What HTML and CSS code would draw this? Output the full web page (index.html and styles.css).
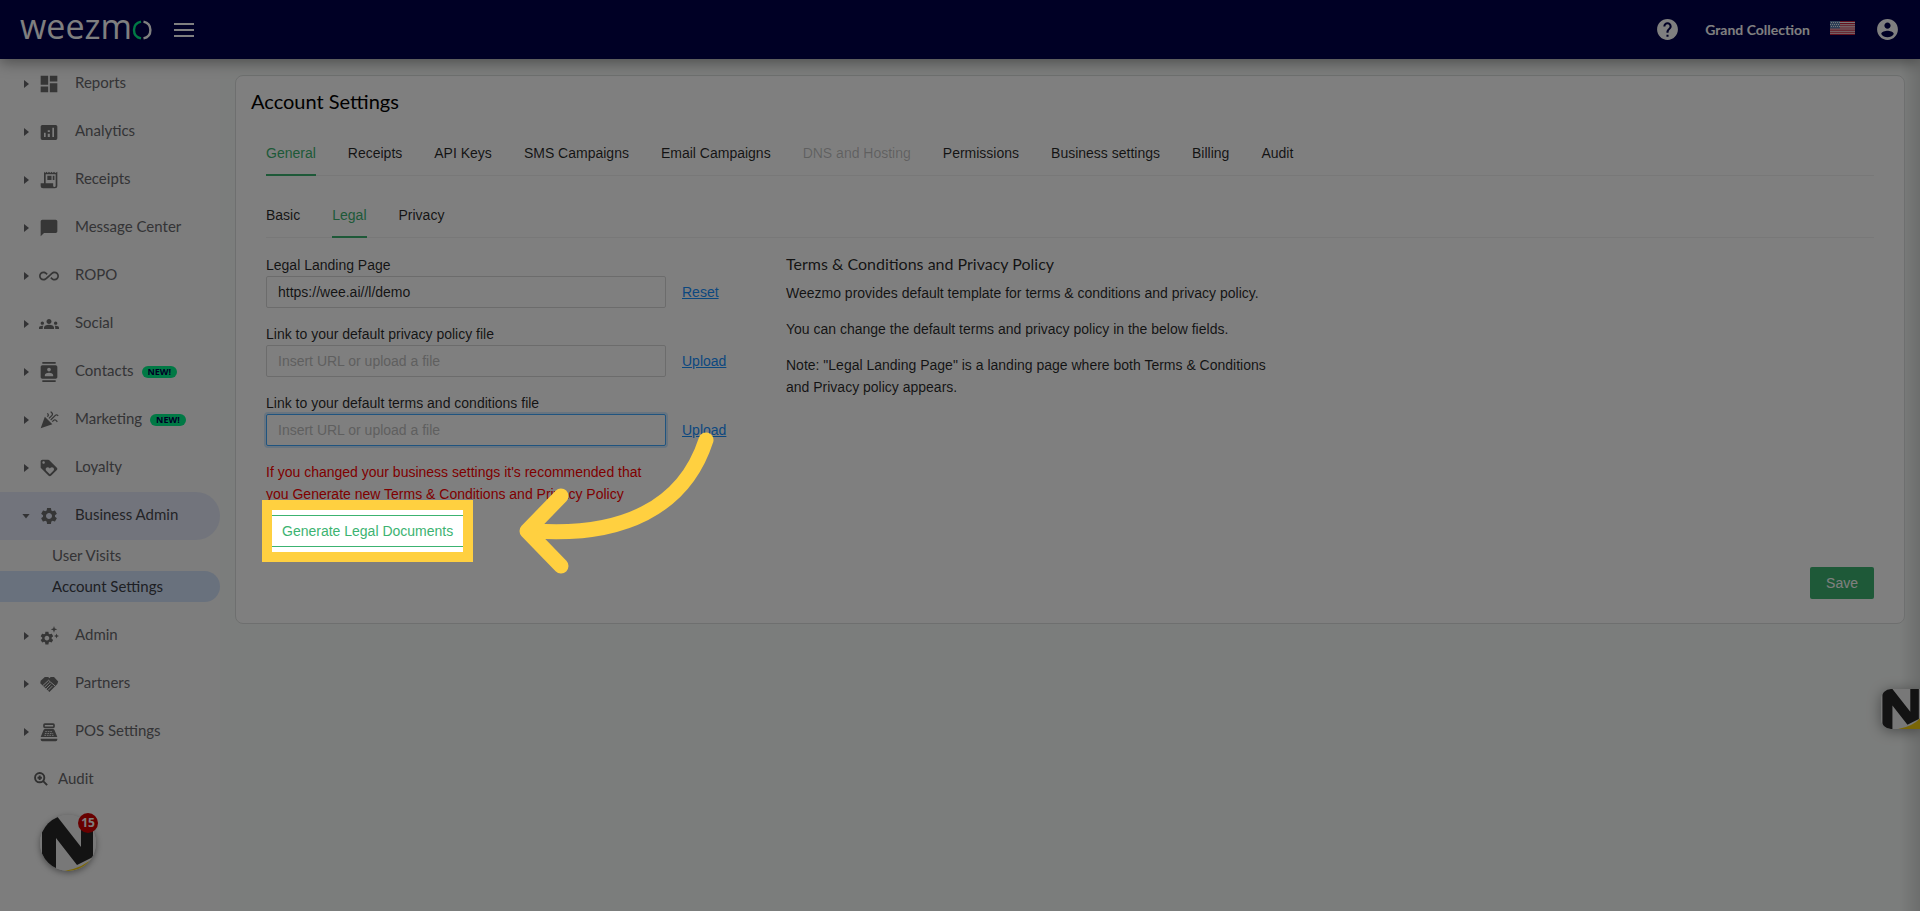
FILE: index.html
```html
<!DOCTYPE html>
<html lang="en">
<head>
<meta charset="utf-8">
<title>Account Settings</title>
<link rel="stylesheet" href="styles.css">
</head>
<body>
<svg class="sprite" aria-hidden="true">
  <symbol id="gear" viewBox="0 0 24 24"><path d="M19.14 12.94c.04-.3.06-.61.06-.94 0-.32-.02-.64-.07-.94l2.03-1.58c.18-.14.23-.41.12-.61l-1.92-3.32c-.12-.22-.37-.29-.59-.22l-2.39.96c-.5-.38-1.03-.7-1.62-.94l-.36-2.54c-.04-.24-.24-.41-.48-.41h-3.84c-.24 0-.43.17-.47.41l-.36 2.54c-.59.24-1.13.57-1.62.94l-2.39-.96c-.22-.08-.47 0-.59.22L2.74 8.87c-.12.21-.08.47.12.61l2.03 1.58c-.05.3-.09.63-.09.94s.02.64.07.94l-2.03 1.58c-.18.14-.23.41-.12.61l1.92 3.32c.12.22.37.29.59.22l2.39-.96c.5.38 1.03.7 1.62.94l.36 2.54c.05.24.24.41.48.41h3.84c.24 0 .44-.17.47-.41l.36-2.54c.59-.24 1.13-.56 1.62-.94l2.39.96c.22.08.47 0 .59-.22l1.92-3.32c.12-.22.07-.47-.12-.61l-2.01-1.58zM12 15.6c-1.98 0-3.6-1.62-3.6-3.6s1.62-3.6 3.6-3.6 3.6 1.62 3.6 3.6-1.62 3.6-3.6 3.6z"/></symbol>
  <symbol id="mark" viewBox="0 0 56 56"><rect width="56" height="56" fill="#f0f0f0"/><path d="M56 40V56H24Q44 53 56 40z" fill="#f5cc0c"/><path d="M2 0H16L41 32V0H53V42L37 50L16 23V56H2z" fill="#262626"/></symbol>
</svg>

<header class="topbar">
  <a class="logo" href="#" aria-label="weezmo">
    <span class="logo-text">weezm</span>
    <svg width="20" height="20" viewBox="0 0 20 20" fill="none" stroke-width="2.4"><path d="M9 1.6Q2 3 2 10T9 18.4" stroke="#00f28a"/><path d="M11.5 1.6Q18.4 3 18.4 10T11.5 18.4" stroke="#fff"/></svg>
  </a>
  <button class="icon-button" aria-label="Toggle menu"><svg width="20" height="14" viewBox="0 0 20 14" fill="#fff"><path d="M0 0h20v2H0zM0 6h20v2H0zM0 12h20v2H0z"/></svg></button>
  <div class="topbar-right">
    <button class="icon-button" aria-label="Help"><svg width="25" height="25" viewBox="0 0 24 24" fill="#fff"><path d="M12 2C6.48 2 2 6.48 2 12s4.48 10 10 10 10-4.48 10-10S17.52 2 12 2zm1 17h-2v-2h2v2zm2.07-7.75l-.9.92C13.45 12.9 13 13.5 13 15h-2v-.5c0-1.1.45-2.1 1.17-2.83l1.24-1.26c.37-.36.59-.86.59-1.41 0-1.1-.9-2-2-2s-2 .9-2 2H8c0-2.21 1.79-4 4-4s4 1.79 4 4c0 .88-.36 1.68-.93 2.25z"/></svg></button>
    <span class="account-name">Grand Collection</span>
    <button class="icon-button" aria-label="Language: English (US)"><svg class="flag" width="25" height="14" viewBox="0 0 25 14"><rect width="25" height="14" fill="#f4f4f4"/><path d="M0 .5h25M0 2.6h25M0 4.8h25M0 7h25M0 9.1h25M0 11.2h25M0 13.4h25" stroke="#c8203c" stroke-width="1.1"/><rect width="10" height="7.5" fill="#5b7fae"/><path d="M1 1.5h9M0 3.5h9M1 5.5h9" stroke="#e8f0f8" stroke-width="1" stroke-dasharray="1 1"/></svg></button>
    <button class="icon-button" aria-label="Profile"><svg width="25" height="25" viewBox="0 0 24 24" fill="#fff"><path d="M12 2C6.48 2 2 6.48 2 12s4.48 10 10 10 10-4.48 10-10S17.52 2 12 2zm0 3.2c1.66 0 3 1.34 3 3s-1.34 3-3 3-3-1.34-3-3 1.34-3 3-3zm0 14.3c-2.5 0-4.71-1.28-6-3.22.03-1.99 4-3.08 6-3.08s5.97 1.09 6 3.08c-1.29 1.94-3.5 3.22-6 3.22z"/></svg></button>
  </div>
</header>

<div class="shell">
  <nav class="sidebar" aria-label="Main">
    <a class="nav-item" href="#"><i class="caret"></i><svg class="icon" viewBox="0 0 24 24"><path d="M2 13h9V2H2zM2 22h9v-7H2zM13 22h9V11h-9zM13 2v7h9V2z"/></svg><span>Reports</span></a>
    <a class="nav-item" href="#"><i class="caret"></i><svg class="icon" viewBox="0 0 24 24"><path fill-rule="evenodd" d="M4 3.500h16a2 2 0 0 1 2 2v14a2 2 0 0 1-2 2H4a2 2 0 0 1-2-2v-14a2 2 0 0 1 2-2zM6 13v5h2v-5zM10.500 10v2h2.500v-2zM10.500 14v4h2.500v-4zM16 7v11h2V7z"/></svg><span>Analytics</span></a>
    <a class="nav-item" href="#"><i class="caret"></i><svg class="icon" viewBox="0 0 24 24"><path fill-rule="evenodd" d="M6 2l1.500 1.500L9 2l1.500 1.500L12 2l1.500 1.500L15 2l1.500 1.500L18 2l1.500 1.500L22 2v17a3 3 0 0 1-3 3H5a3 3 0 0 1-3-3v-3h4zM8 5v11h9v3a1.500 1.500 0 0 0 3 0V5z"/><path d="M10 7h5v5h-5zM16.500 7h2v5h-2z"/></svg><span>Receipts</span></a>
    <a class="nav-item" href="#"><i class="caret"></i><svg class="icon" viewBox="0 0 24 24"><path d="M20 2H4c-1.100 0-1.990.9-1.990 2L2 22l4-4h14c1.100 0 2-.9 2-2V4c0-1.100-.9-2-2-2z"/></svg><span>Message Center</span></a>
    <a class="nav-item" href="#"><i class="caret"></i><svg class="icon" viewBox="0 0 24 24"><path d="M18.600 6.620c-1.440 0-2.800.56-3.770 1.530L12 10.660 10.480 12h.01L7.800 14.390c-.64.64-1.490.99-2.400.99-1.870 0-3.390-1.510-3.390-3.380S3.530 8.620 5.400 8.620c.91 0 1.760.35 2.440 1.030l1.130 1 1.510-1.340L9.220 8.200C8.200 7.180 6.840 6.620 5.400 6.620 2.420 6.620 0 9.040 0 12s2.420 5.380 5.400 5.380c1.440 0 2.800-.56 3.770-1.530l2.830-2.500.01.01L13.520 12h-.01l2.690-2.390c.64-.64 1.490-.99 2.400-.99 1.870 0 3.390 1.510 3.390 3.380s-1.520 3.380-3.390 3.380c-.9 0-1.760-.35-2.440-1.030l-1.140-1.010-1.510 1.340 1.270 1.120c1.020 1.010 2.370 1.570 3.820 1.570 2.980 0 5.400-2.410 5.400-5.380s-2.420-5.370-5.400-5.370z"/></svg><span>ROPO</span></a>
    <a class="nav-item" href="#"><i class="caret"></i><svg class="icon" viewBox="0 0 24 24"><path d="M12 12.750c1.630 0 3.070.39 4.240.9 1.080.48 1.760 1.560 1.760 2.730V18H6v-1.610c0-1.180.68-2.260 1.760-2.730 1.170-.52 2.610-.91 4.240-.91zM4 13c1.100 0 2-.9 2-2s-.9-2-2-2-2 .9-2 2 .9 2 2 2zm1.130 1.100c-.37-.06-.74-.1-1.130-.1-.99 0-1.930.21-2.780.58C.48 14.900 0 15.620 0 16.430V18h4.500v-1.610c0-.83.23-1.610.63-2.290zM20 13c1.100 0 2-.9 2-2s-.9-2-2-2-2 .9-2 2 .9 2 2 2zm4 3.430c0-.81-.48-1.530-1.220-1.850-.85-.37-1.790-.58-2.780-.58-.39 0-.76.04-1.130.1.4.68.63 1.460.63 2.290V18H24v-1.570zM12 6c1.660 0 3 1.340 3 3s-1.340 3-3 3-3-1.340-3-3 1.340-3 3-3z"/></svg><span>Social</span></a>
    <a class="nav-item" href="#"><i class="caret"></i><svg class="icon" viewBox="0 0 24 24"><path d="M20 0H4v2h16V0zM4 24h16v-2H4v2zM20 4H4c-1.100 0-2 .9-2 2v12c0 1.100.9 2 2 2h16c1.100 0 2-.9 2-2V6c0-1.100-.9-2-2-2zm-8 2.750c1.240 0 2.250 1.010 2.250 2.250s-1.010 2.250-2.250 2.250S9.750 10.240 9.750 9 10.760 6.750 12 6.750zM17 17H7v-1.500c0-1.670 3.330-2.500 5-2.500s5 .83 5 2.500V17z"/></svg><span>Contacts</span><b class="new">NEW!</b></a>
    <a class="nav-item" href="#"><i class="caret"></i><svg class="icon" viewBox="0 0 24 24"><path d="M2 22l14-5-9-9zM14.530 12.530l5.590-5.590c.49-.49 1.280-.49 1.770 0l.59.59 1.060-1.060-.59-.59c-1.070-1.070-2.820-1.070-3.890 0l-5.590 5.590zM10.060 6.880l-.59.59 1.060 1.060.59-.59c1.070-1.070 1.070-2.820 0-3.890l-.59-.59-1.060 1.070.59.59c.48.48.48 1.280 0 1.760zM17.060 11.880l-1.590 1.590 1.060 1.060 1.590-1.590c.49-.49 1.280-.49 1.770 0l1.610 1.610 1.060-1.060-1.610-1.610c-1.080-1.070-2.820-1.070-3.890 0zM15.060 5.880l-3.590 3.590 1.060 1.060 3.590-3.590c1.070-1.070 1.070-2.820 0-3.890l-1.590-1.590-1.060 1.060 1.590 1.590c.48.49.48 1.290 0 1.770z"/></svg><span>Marketing</span><b class="new">NEW!</b></a>
    <a class="nav-item" href="#"><i class="caret"></i><svg class="icon" viewBox="0 0 24 24"><path d="M21.410 11.580l-9-9C12.050 2.220 11.550 2 11 2H4c-1.100 0-2 .9-2 2v7c0 .55.22 1.050.59 1.420l9 9c.36.36.86.58 1.410.58.55 0 1.050-.22 1.410-.59l7-7c.37-.36.59-.86.59-1.410 0-.55-.23-1.060-.59-1.420zM5.500 7C4.670 7 4 6.330 4 5.500S4.670 4 5.500 4 7 4.670 7 5.500 6.330 7 5.500 7zm11.770 8.270L13 19.540l-4.270-4.270C8.280 14.810 8 14.190 8 13.500c0-1.380 1.120-2.500 2.500-2.500.69 0 1.320.28 1.770.74l.73.72.73-.73c.45-.45 1.080-.73 1.770-.73 1.380 0 2.500 1.120 2.500 2.500 0 .69-.28 1.320-.73 1.770z"/></svg><span>Loyalty</span></a>
    <a class="nav-item open" href="#"><i class="caret"></i><svg class="icon"><use href="#gear"/></svg><span>Business Admin</span></a>
    <div class="subnav">
      <a class="sub-item" href="#">User Visits</a>
      <a class="sub-item current" href="#" aria-current="page">Account Settings</a>
    </div>
    <a class="nav-item" href="#"><i class="caret"></i><svg class="icon" viewBox="0 0 24 24"><use href="#gear" x="0" y="5" width="19" height="19"/><path d="M18 0l1 3 3 1-3 1-1 3-1-3-3-1 3-1zM21 9l.8 2.200L24 12l-2.200.8L21 15l-.8-2.200L18 12l2.200-.8z"/></svg><span>Admin</span></a>
    <a class="nav-item" href="#"><i class="caret"></i><svg class="icon" viewBox="0 0 24 24"><path d="M7 3.500h4L12.500 5 14 3.500h4l5 5.500-1 3-9.500 9.500L1.500 11 2 8z"/><path d="M4.500 14l7-6.500 2 2M6.500 16l6-6M8.500 18l5.500-5.500M10.500 20l5.500-5.500M13.500 9.500l6 5" fill="none" stroke="#fafafa" stroke-width="1.200"/></svg><span>Partners</span></a>
    <a class="nav-item" href="#"><i class="caret"></i><svg class="icon" viewBox="0 0 24 24"><path fill-rule="evenodd" d="M7 1.500h10a2 2 0 0 1 2 2v2a2 2 0 0 1-2 2H7a2 2 0 0 1-2-2v-2a2 2 0 0 1 2-2zM7 3.500v2h10v-2zM7.300 8.500h9.400a2 2 0 0 1 1.830 1.190L22 18H2l3.470-8.310A2 2 0 0 1 7.300 8.500zM2 20h20v1a2 2 0 0 1-2 2H4a2 2 0 0 1-2-2z"/><path d="M7.500 11.500h9M7 13.800h10M6.500 16h11" stroke="#fafafa" stroke-width="1" stroke-dasharray="2 1"/></svg><span>POS Settings</span></a>
    <a class="nav-item plain" href="#"><svg class="icon small" viewBox="0 0 16 16" fill="none" stroke="#606060" stroke-width="2.200"><circle cx="6.500" cy="6.500" r="5.300"/><path d="M10.500 10.500L15 15M6.500 4v5M4 6.500h5"/></svg><span>Audit</span></a>
    <button class="assistant" aria-label="Messages, 15 unread"><svg width="56" height="56"><use href="#mark"/></svg><span class="count">15</span></button>
  </nav>

  <main class="content">
    <section class="card">
      <h1>Account Settings</h1>
      <div class="card-body">
        <nav class="tabs" aria-label="Settings">
          <a class="active" href="#">General</a><a href="#">Receipts</a><a href="#">API Keys</a><a href="#">SMS Campaigns</a><a href="#">Email Campaigns</a><a class="disabled" aria-disabled="true">DNS and Hosting</a><a href="#">Permissions</a><a href="#">Business settings</a><a href="#">Billing</a><a href="#">Audit</a>
        </nav>
        <nav class="tabs" aria-label="General">
          <a href="#">Basic</a><a class="active" href="#">Legal</a><a href="#">Privacy</a>
        </nav>
        <div class="columns">
          <form class="form">
            <div class="field">
              <label for="landing">Legal Landing Page</label>
              <div class="row"><input id="landing" type="text" value="https://wee.ai//l/demo"><a href="#">Reset</a></div>
            </div>
            <div class="field">
              <label for="privacy">Link to your default privacy policy file</label>
              <div class="row"><input id="privacy" type="text" placeholder="Insert URL or upload a file"><a href="#">Upload</a></div>
            </div>
            <div class="field">
              <label for="terms">Link to your default terms and conditions file</label>
              <div class="row"><input id="terms" class="focused" type="text" placeholder="Insert URL or upload a file"><a href="#">Upload</a></div>
            </div>
            <p class="warning">If you changed your business settings it's recommended that you Generate new Terms &amp; Conditions and Privacy Policy</p>
            <div class="generate">
              <button class="outline" type="button">Generate Legal Documents</button>
              <div class="spotlight"></div>
              <svg class="arrow" width="210" height="150" viewBox="0 0 210 150" fill="none" stroke="#ffd040" stroke-width="15" stroke-linecap="round" stroke-linejoin="round"><path d="M196 15C174 83 112 112 24 106"/><path d="M51 71L17 106L51 141"/></svg>
            </div>
          </form>
          <div class="info">
            <h2>Terms &amp; Conditions and Privacy Policy</h2>
            <p>Weezmo provides default template for terms &amp; conditions and privacy policy.</p>
            <p>You can change the default terms and privacy policy in the below fields.</p>
            <p>Note: "Legal Landing Page" is a landing page where both Terms &amp; Conditions and Privacy policy appears.</p>
          </div>
        </div>
        <div class="actions"><button class="save" type="button">Save</button></div>
      </div>
    </section>
  </main>
</div>
<button class="side-tab" aria-label="Open panel"><svg width="40" height="40"><use href="#mark"/></svg></button>
</body>
</html>
```
FILE: styles.css
```css
* { box-sizing: border-box; }

body {
  margin: 0;
  min-height: 100vh;
  display: flex;
  flex-direction: column;
  overflow: hidden;
  background: #f7faf8;
  color: rgba(0, 0, 0, 0.85);
  font: 14px/22px "Liberation Sans", Arial, sans-serif;
}

button { padding: 0; border: 0; background: none; font: inherit; cursor: pointer; }
a { color: inherit; text-decoration: none; }
.sprite { position: absolute; width: 0; height: 0; }

/* Top bar */
.topbar {
  position: relative;
  z-index: 1;
  display: flex;
  align-items: center;
  height: 59px;
  padding: 0 20px;
  gap: 22px;
  background: #00004a;
  color: #fff;
  box-shadow: 0 3px 14px rgba(0, 0, 0, 0.4);
}
.logo { display: flex; align-items: center; }
.logo-text { font: 400 34px/48px "Open Sans", sans-serif; padding-bottom: 8px; }
.icon-button { display: flex; align-items: center; }
.topbar-right { display: flex; align-items: center; gap: 20px; margin-left: auto; }
.account-name { padding-left: 5px; font: 700 14px/20px Lato, sans-serif; }
.flag { margin-bottom: 3px; }

/* Sidebar */
.shell { flex: 1; display: flex; }
.sidebar {
  width: 220px;
  flex: none;
  padding-top: 1px;
  background: #fafafa;
  color: #68686c;
  font: 15px/20px Lato, sans-serif;
}
.nav-item { display: flex; align-items: center; height: 48px; padding-left: 24px; border-radius: 0 24px 24px 0; }
.nav-item span { padding-bottom: 4px; }
.caret { width: 5px; height: 8px; margin-right: 10px; background: #66666a; clip-path: polygon(0 0, 100% 50%, 0 100%); }
.icon { width: 20px; height: 20px; margin-right: 16px; fill: #6c6c6c; }
.nav-item.open { padding-left: 22px; background: #e4e9f8; color: #48484e; }
.open .caret { width: 8px; height: 5px; margin-right: 9px; clip-path: polygon(0 0, 100% 0, 50% 100%); }
.new {
  margin-left: 8px;
  padding: 0 6px;
  border-radius: 6px;
  background: #00f28a;
  color: #00004a;
  font: 700 9px/12px "Open Sans", sans-serif;
}
.subnav { padding-bottom: 10px; }
.sub-item { display: block; padding: 5px 0 6px 52px; border-radius: 0 16px 16px 0; }
.sub-item.current { background: #d2e2fa; color: #3c3f48; }
.nav-item.plain { padding-left: 34px; }
.icon.small { width: 14px; height: 14px; margin-right: 10px; margin-bottom: 2px; fill: none; }
.assistant { position: relative; display: block; margin: 11px 0 0 40px; width: 56px; height: 56px; }
.assistant svg { display: block; border-radius: 50%; box-shadow: 0 2px 6px rgba(0, 0, 0, 0.4); }
.count {
  position: absolute;
  top: -2px;
  right: -2px;
  width: 20px;
  border-radius: 50%;
  background: #d00000;
  color: #fff;
  font: 700 12px/20px "Open Sans", sans-serif;
}

/* Card */
.content {
  flex: 1;
  min-width: 0;
  padding: 16px 15px;
  background: linear-gradient(to left, rgba(0, 0, 0, 0.12), transparent 20px);
}
.card { padding: 10px 15px 24px; border: 1px solid #dcdfde; border-radius: 8px; background: #fff; }
h1 { margin: 0 0 14px; color: #000; font: 400 20px/30px Lato, sans-serif; }
.card-body { padding: 0 15px; }
.tabs { display: flex; gap: 32px; margin-bottom: 16px; border-bottom: 1px solid #f0f0f0; }
.tabs a { padding: 12px 0 10px; margin-bottom: -1px; border-bottom: 2px solid transparent; white-space: nowrap; }
.tabs .active { color: #3cb371; border-color: #3cb371; }
.tabs .disabled { color: rgba(0, 0, 0, 0.25); }

.columns { display: flex; align-items: flex-start; }
.form { flex: 0 0 520px; }
.field { margin-bottom: 15px; }
.field label { display: block; }
.row { display: flex; align-items: center; gap: 16px; }
.row a { color: #1890ff; text-decoration: underline; }
.row input {
  width: 400px;
  height: 32px;
  padding: 4px 11px;
  border: 1px solid #d9d9d9;
  border-radius: 2px;
  background: #fff;
  color: inherit;
  font: inherit;
}
.row input::placeholder { color: #bfbfbf; }
.row .focused { border-color: #40a9ff; box-shadow: 0 0 0 2px rgba(24, 144, 255, 0.2); outline: 0; }
.warning { width: 400px; margin: 0 0 10px; color: #f00; }
.outline {
  height: 32px;
  padding: 0 15px;
  border: 1px solid #3cb371;
  border-radius: 2px;
  background: #fff;
  color: #3cb371;
}

/* Tour step: dims the page around the highlighted button */
.generate { position: relative; width: fit-content; height: 32px; display: flex; }
.spotlight {
  position: absolute;
  z-index: 10;
  inset: -15px -4px;
  border: 10px solid #ffd040;
  box-shadow: 0 0 0 3000px rgba(0, 0, 0, 0.5);
}
.arrow { position: absolute; z-index: 11; left: 244px; top: -90px; }

.info { flex: 0 1 500px; }
.info h2 { margin: 0 0 8px; font: 400 16px/20px Lato, sans-serif; }
.info p { margin: 0 0 14px; }
.actions { display: flex; justify-content: flex-end; margin-top: 20px; }
.save { height: 32px; padding: 0 16px; border-radius: 2px; background: #3cb371; color: #fff; }

.side-tab {
  position: fixed;
  right: -1px;
  bottom: 182px;
  width: 40px;
  height: 40px;
  overflow: hidden;
  border-radius: 10px 0 0 10px;
  box-shadow: 0 2px 14px rgba(0, 0, 0, 0.4);
}
```
